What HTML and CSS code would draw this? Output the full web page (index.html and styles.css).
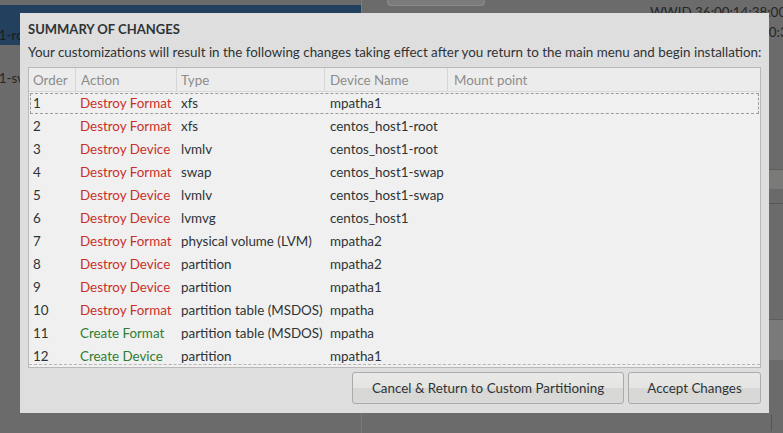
FILE: index.html
```html
<!DOCTYPE html>
<html>
<head>
<meta charset="utf-8">
<link rel="stylesheet" href="styles.css">
</head>
<body>
<div class="backdrop">
  <div class="pane-left">
    <div class="bg-row selected"><span class="bg-text">t1-root</span></div>
    <div class="bg-row"><span class="bg-text">t1-swap</span></div>
  </div>
  <div class="pane-right">
    <div class="top-strip">
      <div class="ghost-button"></div>
    </div>
    <div class="wwid">WWID 36:00:14:38:00:9</div>
    <div class="wwid second">00:3</div>
    <div class="band-a"></div>
    <div class="band-b"></div>
    <div class="band-c"></div>
    <div class="bottom-strip"><span class="u-letter">U</span></div>
  </div>
</div>

<div class="dialog">
  <div class="title">SUMMARY OF CHANGES</div>
  <div class="subtitle">Your customizations will result in the following changes taking effect after you return to the main menu and begin installation:</div>
  <div class="table">
    <div class="thead">
      <div class="c c1">Order</div>
      <div class="c c2">Action</div>
      <div class="c c3">Type</div>
      <div class="c c4">Device Name</div>
      <div class="c c5">Mount point</div>
    </div>
    <div class="tbody">
      <div class="row focus"><div class="c c1">1</div><div class="c c2 destroy">Destroy Format</div><div class="c c3">xfs</div><div class="c c4">mpatha1</div><div class="c c5"></div></div>
      <div class="row"><div class="c c1">2</div><div class="c c2 destroy">Destroy Format</div><div class="c c3">xfs</div><div class="c c4">centos_host1-root</div><div class="c c5"></div></div>
      <div class="row"><div class="c c1">3</div><div class="c c2 destroy">Destroy Device</div><div class="c c3">lvmlv</div><div class="c c4">centos_host1-root</div><div class="c c5"></div></div>
      <div class="row"><div class="c c1">4</div><div class="c c2 destroy">Destroy Format</div><div class="c c3">swap</div><div class="c c4">centos_host1-swap</div><div class="c c5"></div></div>
      <div class="row"><div class="c c1">5</div><div class="c c2 destroy">Destroy Device</div><div class="c c3">lvmlv</div><div class="c c4">centos_host1-swap</div><div class="c c5"></div></div>
      <div class="row"><div class="c c1">6</div><div class="c c2 destroy">Destroy Device</div><div class="c c3">lvmvg</div><div class="c c4">centos_host1</div><div class="c c5"></div></div>
      <div class="row"><div class="c c1">7</div><div class="c c2 destroy">Destroy Format</div><div class="c c3">physical volume (LVM)</div><div class="c c4">mpatha2</div><div class="c c5"></div></div>
      <div class="row"><div class="c c1">8</div><div class="c c2 destroy">Destroy Device</div><div class="c c3">partition</div><div class="c c4">mpatha2</div><div class="c c5"></div></div>
      <div class="row"><div class="c c1">9</div><div class="c c2 destroy">Destroy Device</div><div class="c c3">partition</div><div class="c c4">mpatha1</div><div class="c c5"></div></div>
      <div class="row"><div class="c c1">10</div><div class="c c2 destroy">Destroy Format</div><div class="c c3">partition table (MSDOS)</div><div class="c c4">mpatha</div><div class="c c5"></div></div>
      <div class="row"><div class="c c1">11</div><div class="c c2 create">Create Format</div><div class="c c3">partition table (MSDOS)</div><div class="c c4">mpatha</div><div class="c c5"></div></div>
      <div class="row"><div class="c c1">12</div><div class="c c2 create">Create Device</div><div class="c c3">partition</div><div class="c c4">mpatha1</div><div class="c c5"></div></div>
    </div>
  </div>
  <div class="buttons">
    <button class="btn btn-cancel">Cancel &amp; Return to Custom Partitioning</button>
    <button class="btn btn-accept">Accept Changes</button>
  </div>
</div>
</body>
</html>
```

FILE: styles.css
```css
html, body {
  margin: 0;
  padding: 0;
  width: 783px;
  height: 433px;
  overflow: hidden;
  background: #6b6b6b;
  font-family: "Lato", "Noto Sans", sans-serif;
  font-size: 13.4px;
  color: #2e3436;
}

.backdrop {
  display: grid;
  grid-template-columns: 361px 1fr;
  height: 433px;
}

.pane-left {
  display: flex;
  flex-direction: column;
  padding-top: 5px;
}

.bg-row {
  height: 40px;
  display: flex;
  align-items: flex-end;
  padding-bottom: 2px;
  box-sizing: border-box;
  overflow: hidden;
  margin-bottom: 3px;
}

.bg-row.selected {
  background: #23405f;
}

.bg-text {
  margin-left: -6px;
  color: #262626;
  font-size: 13.4px;
  line-height: 16px;
  white-space: nowrap;
}

.bg-row.selected .bg-text {
  color: #1c1c1c;
}

.pane-right {
  border-left: 1px solid #7a7a7a;
  position: relative;
  display: flex;
  flex-direction: column;
}

.top-strip {
  height: 6px;
  padding-left: 25px;
}

.ghost-button {
  width: 96px;
  height: 5px;
  border: 1px solid #8a8a8a;
  border-top: none;
  border-radius: 0 0 4px 4px;
  background: #7b7b7b;
}

.wwid {
  align-self: flex-start;
  margin-left: 288px;
  margin-top: -2px;
  color: #262626;
  font-size: 13.4px;
  line-height: 16px;
  white-space: nowrap;
}

.wwid.second {
  margin-left: 399px;
  margin-top: 4px;
}

.band-a {
  margin-top: 129px;
  height: 19px;
  border-top: 1px solid #5c5c5c;
  background: #7a7a78;
}

.band-b {
  height: 14px;
  background: #6a6a6a;
  border-bottom: 1px solid #555;
}

.band-c {
  margin-top: 115px;
  height: 40px;
  border-top: 1px solid #5c5c5c;
  background: #7a7a7a;
}

.bottom-strip {
  margin-top: auto;
  height: 20px;
  display: flex;
  justify-content: flex-end;
  align-items: center;
}

.u-letter {
  border-left: 1px solid #555;
  padding-left: 17px;
  width: 8px;
  color: #9a9a9a;
  font-size: 13.4px;
}

/* dialog */
.dialog {
  position: absolute;
  left: 20px;
  top: 13px;
  width: 749px;
  height: 400px;
  box-sizing: border-box;
  background: #dedede;
  padding: 7px 8px 9px 8px;
  display: flex;
  flex-direction: column;
}

.title {
  font-size: 13px;
  line-height: 18px;
  font-weight: 700;
  color: #2e3436;
}

.subtitle {
  margin-top: 5px;
  line-height: 18px;
  white-space: nowrap;
  color: #2e3436;
}

.table {
  margin-top: 6px;
  border: 1px solid #b9b9b9;
  background: #f0f0f0;
  display: flex;
  flex-direction: column;
  height: 301px;
  box-sizing: border-box;
}

.thead {
  display: flex;
  height: 24px;
  box-sizing: border-box;
  border-bottom: 1px solid #d8d8d8;
  background: #ececec;
  color: #8d8d8d;
}

.thead .c {
  border-right: 1px solid #d6d6d6;
  display: flex;
  align-items: center;
}

.thead .c5 {
  border-right: none;
}

.c {
  box-sizing: border-box;
  white-space: nowrap;
  overflow: hidden;
}

.c1 { width: 47px; padding-left: 4px; }
.c2 { width: 101px; padding-left: 5px; }
.c3 { width: 148px; padding-left: 4px; }
.c4 { width: 123px; padding-left: 5px; }
.c5 { flex: 1; padding-left: 6px; }

.tbody {
  flex: 1;
  overflow: hidden;
  border-bottom: 1px dashed #b4b4b4;
  margin-bottom: 2px;
}

.row {
  display: flex;
  height: 23px;
  align-items: center;
  padding-bottom: 1px;
  box-sizing: border-box;
}

.row .c2 { padding-left: 4px; }

.row.focus {
  outline: 1px dashed #9c9c9c;
  outline-offset: -2px;
}

.destroy { color: #c9302c; }
.create { color: #2f7d32; }

.buttons {
  margin-top: 4px;
  display: flex;
  justify-content: flex-end;
  gap: 4px;
}

.btn {
  height: 32px;
  font-family: inherit;
  font-size: 13.4px;
  color: #2e3436;
  border: 1px solid #ababab;
  border-radius: 3px;
  background: linear-gradient(to bottom, #e9e9e7 0%, #e4e4e2 50%, #d7d7d5 52%, #d9d9d7 100%);
  padding: 0;
}

.btn-cancel { width: 272px; }
.btn-accept { width: 133px; }
```
